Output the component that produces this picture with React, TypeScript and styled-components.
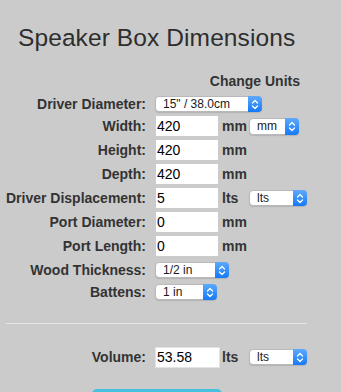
import React from 'react'
import styled, { createGlobalStyle } from 'styled-components'

const GlobalStyle = createGlobalStyle`
    body {
        margin: 0;
        background: #cbcbcb;
        font-family: "Liberation Sans", Arial, Helvetica, sans-serif;
        color: #333333;
    }
`

const Page = styled.div`
    width: 341px;
    padding-top: 24px;
`

const Title = styled.h1`
    margin: 0 0 0 18px;
    font-size: 24.5px;
    line-height: 28px;
    font-weight: 400;
    color: #2e2e2e;
    letter-spacing: 0.1px;
`

const UnitsHeading = styled.div`
    width: 300px;
    margin-top: 21px;
    text-align: right;
    font-size: 14px;
    font-weight: 700;
    line-height: 16px;
`

const Form = styled.div`
    margin-top: 5px;
    display: flex;
    flex-direction: column;
`

const Row = styled.div<{ $h: number }>`
    display: flex;
    align-items: center;
    height: ${({ $h }) => $h}px;
`

const Label = styled.label`
    width: 146px;
    text-align: right;
    font-size: 14px;
    font-weight: 700;
    line-height: 16px;
    color: #333333;
    margin-right: 9px;
    white-space: nowrap;
`

const InputCell = styled.div`
    width: 67px;
    display: flex;
`

const TextInput = styled.input<{ $bordered?: boolean }>`
    box-sizing: border-box;
    width: ${({ $bordered }) => ($bordered ? 65 : 62)}px;
    height: ${({ $bordered }) => ($bordered ? 21 : 20)}px;
    margin: 0 0 0 ${({ $bordered }) => ($bordered ? 0 : 1)}px;
    padding: 0 1px;
    border: ${({ $bordered }) => ($bordered ? '1px solid #e3e3e3' : 'none')};
    background: #ffffff;
    font-family: "Liberation Sans", Arial, sans-serif;
    font-size: 14px;
    color: #000000;
    outline: none;
`

const Unit = styled.span`
    width: 27px;
    font-size: 14px;
    font-weight: 700;
    line-height: 16px;
    color: #333333;
`

const SelectBox = styled.div<{ $w: number; $h?: number }>`
    box-sizing: border-box;
    width: ${({ $w }) => $w}px;
    height: ${({ $h }) => $h ?? 16}px;
    display: flex;
    align-items: stretch;
    background: #ffffff;
    border: 1px solid #b9b9b9;
    border-radius: 4px;
    box-shadow: 0 1px 1px rgba(0, 0, 0, 0.12);
`

const SelectText = styled.span`
    flex: 1;
    padding-left: 7px;
    font-size: 12px;
    line-height: 14px;
    color: #1a1a1a;
    white-space: nowrap;
    overflow: hidden;
`

const Stepper = styled.span`
    width: 14px;
    margin: -1px -1px -1px 0;
    border-radius: 0 4px 4px 0;
    background: linear-gradient(#5eaafb, #1579f9);
    display: flex;
    align-items: center;
    justify-content: center;
`

const Divider = styled.hr`
    width: 301px;
    margin: 21px 0 0 6px;
    border: none;
    border-top: 1px solid #e6e6e6;
    height: 0;
`

const VolumeRow = styled(Row)`
    margin-top: 21px;
`

// only the top edge of the button shows in the frame
const CalcButton = styled.button`
    display: block;
    width: 130px;
    height: 36px;
    margin: 20px 0 0 92px;
    border: none;
    border-radius: 5px;
    background: #46c1de;
`

const Select = ({ value, w, h }: { value: string; w: number; h?: number }) => (
    <SelectBox $w={w} $h={h}>
        <SelectText>{value}</SelectText>
        <Stepper>
            <svg width="8" height="11" viewBox="0 0 8 11" fill="none">
                <path d="M1.5 4 L4 1.5 L6.5 4" stroke="#fff" strokeWidth="1.3" strokeLinecap="round" strokeLinejoin="round" />
                <path d="M1.5 7 L4 9.5 L6.5 7" stroke="#fff" strokeWidth="1.3" strokeLinecap="round" strokeLinejoin="round" />
            </svg>
        </Stepper>
    </SelectBox>
)

type Field = { label: string; value: string; unit: string; select?: { value: string; w: number; h?: number } }

const fields: Field[] = [
    { label: 'Width:', value: '420', unit: 'mm', select: { value: 'mm', w: 50, h: 17 } },
    { label: 'Height:', value: '420', unit: 'mm' },
    { label: 'Depth:', value: '420', unit: 'mm' },
    { label: 'Driver Displacement:', value: '5', unit: 'lts', select: { value: 'lts', w: 58 } },
    { label: 'Port Diameter:', value: '0', unit: 'mm' },
    { label: 'Port Length:', value: '0', unit: 'mm' },
]

export default function App() {
    return (
        <Page>
            <GlobalStyle />
            <Title>Speaker Box Dimensions</Title>
            <UnitsHeading>Change Units</UnitsHeading>
            <Form>
                <Row $h={20}>
                    <Label>Driver Diameter:</Label>
                    <Select value={'15" / 38.0cm'} w={107} />
                </Row>
                {fields.map((f) => (
                    <Row $h={24} key={f.label}>
                        <Label>{f.label}</Label>
                        <InputCell>
                            <TextInput defaultValue={f.value} />
                        </InputCell>
                        <Unit>{f.unit}</Unit>
                        {f.select && <Select value={f.select.value} w={f.select.w} h={f.select.h} />}
                    </Row>
                ))}
                <Row $h={24}>
                    <Label>Wood Thickness:</Label>
                    <Select value="1/2 in" w={74} />
                </Row>
                <Row $h={20}>
                    <Label>Battens:</Label>
                    <Select value="1 in" w={62} />
                </Row>
            </Form>
            <Divider />
            <VolumeRow $h={24}>
                <Label>Volume:</Label>
                <InputCell>
                    <TextInput $bordered defaultValue="53.58" />
                </InputCell>
                <Unit>lts</Unit>
                <Select value="lts" w={58} />
            </VolumeRow>
            <CalcButton aria-label="Calculate" />
        </Page>
    )
}
